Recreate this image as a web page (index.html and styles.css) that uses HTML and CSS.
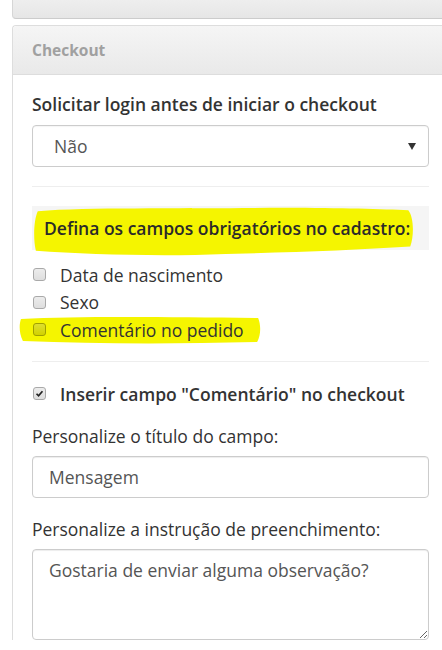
FILE: index.html
```html
<!DOCTYPE html>
<html lang="pt">
<head>
<meta charset="utf-8">
<link rel="stylesheet" href="styles.css">
</head>
<body>
<div class="page">
  <div class="panel panel-top"></div>
  <div class="panel panel-checkout">
    <div class="panel-heading">Checkout</div>
    <div class="panel-body">
      <label class="field-label semibold">Solicitar login antes de iniciar o checkout</label>
      <div class="select">
        <span>Não</span>
        <span class="caret"></span>
      </div>
      <hr class="sep sep-1">
      <div class="well">
        <svg class="marker marker-title" viewBox="0 0 400 50" preserveAspectRatio="none" aria-hidden="true">
          <path d="M6 6 C60 2 150 4 220 3 C300 2 360 4 392 5 C398 12 398 30 394 40 C330 44 250 46 170 48 C110 49 50 47 4 44 C1 32 2 14 6 6 Z" />
        </svg>
        <span class="well-text">Defina os campos obrigatórios no cadastro:</span>
      </div>
      <div class="checks">
        <div class="check-row"><span class="cb"></span><span>Data de nascimento</span></div>
        <div class="check-row"><span class="cb"></span><span>Sexo</span></div>
        <div class="check-row highlighted">
          <svg class="marker marker-row" viewBox="0 0 250 30" preserveAspectRatio="none" aria-hidden="true">
            <path d="M2 4 C60 1 150 2 246 3 C249 10 249 20 245 27 C160 29 80 29 4 26 C0 18 0 10 2 4 Z" />
          </svg>
          <span class="cb"></span><span>Comentário no pedido</span>
        </div>
      </div>
      <hr class="sep sep-2">
      <div class="check-row strong"><span class="cb checked"><svg viewBox="0 0 13 13" aria-hidden="true"><path d="M3 6.8 L5.4 9.2 L10 3.8" /></svg></span><span>Inserir campo "Comentário" no checkout</span></div>
      <label class="field-label lbl-2">Personalize o título do campo:</label>
      <input class="input" type="text" value="Mensagem">
      <label class="field-label lbl-3">Personalize a instrução de preenchimento:</label>
      <textarea class="textarea">Gostaria de enviar alguma observação?</textarea>
    </div>
  </div>
</div>
</body>
</html>
```

FILE: styles.css
```css
* { box-sizing: border-box; }
html, body { margin: 0; padding: 0; background: #fff; }
body {
  font-family: "Open Sans", "Liberation Sans", sans-serif;
  color: #333;
  font-size: 17.5px;
  overflow: hidden;
  width: 442px;
  height: 650px;
}
.page {
  padding-left: 12px;
  width: 442px;
  overflow: hidden;
}
.panel {
  border: 1px solid #d6d6d6;
  border-right: none;
  border-radius: 4px 0 0 4px;
}
.panel-top {
  height: 19px;
  background: linear-gradient(#eeeeee, #e6e6e6);
  border-top: none;
  border-bottom-color: #cccccc;
  border-radius: 0 0 0 4px;
}
.panel-checkout {
  margin-top: 6px;
  border-color: #dddddd;
  border-bottom: none;
  border-radius: 4px 0 0 0;
}
.panel-heading {
  height: 49px;
  padding-left: 19px;
  display: flex;
  align-items: center;
  font-size: 15.5px;
  font-weight: 700;
  color: #a0a0a0;
  background: linear-gradient(#f5f5f5, #e9e9e9);
  border-bottom: 1px solid #dddddd;
  border-radius: 4px 0 0 0;
}
.panel-body {
  padding: 17px 0 0 19px;
  width: 416px;
}
.field-label {
  display: block;
  line-height: 24px;
  color: #333;
}
.semibold { font-weight: 600; }
.select {
  margin-top: 9px;
  height: 42px;
  border: 1px solid #cccccc;
  border-radius: 4px;
  display: flex;
  align-items: center;
  justify-content: space-between;
  padding: 0 12px 0 21px;
  color: #555;
  background: #fff;
  box-shadow: inset 0 1px 1px rgba(0,0,0,0.04);
}
.caret {
  width: 0; height: 0;
  border-left: 4px solid transparent;
  border-right: 4px solid transparent;
  border-top: 7px solid #333;
}
.sep {
  border: none;
  border-top: 1px solid #eeeeee;
  margin: 0;
}
.sep-1 { margin-top: 19px; }
.well {
  position: relative;
  margin-top: 19px;
  height: 44px;
  background: #f5f5f5;
  display: flex;
  align-items: center;
  padding-left: 12px;
}
.well-text { position: relative; font-weight: 600; color: #2a2a2a; }
.marker {
  position: absolute;
  fill: #f5f500;
}
.marker-title {
  left: 0;
  top: -1px;
  width: 384px;
  height: 52px;
}
.checks { margin-top: 11px; }
.check-row {
  position: relative;
  display: flex;
  align-items: center;
  height: 27.5px;
}
.check-row > span { position: relative; }
.marker-row {
  left: -13px;
  top: -1px;
  width: 243px;
  height: 30px;
}
.cb {
  width: 13px;
  height: 13px;
  margin-left: 1px;
  margin-right: 14px;
  border: 1px solid #a9a9a9;
  border-radius: 3px;
  background: linear-gradient(#ececec, #dedede);
  flex: none;
  display: inline-flex;
}
.highlighted .cb { border-color: #a0a000; background: linear-gradient(#dede30, #d2d200); }
.cb svg { width: 11px; height: 11px; }
.cb svg path { fill: none; stroke: #222; stroke-width: 2; }
.sep-2 { margin-top: 17px; }
.strong {
  margin-top: 18px;
  font-weight: 600;
  height: 28px;
}
.lbl-2 { margin-top: 16px; }
.input, .textarea {
  display: block;
  width: 100%;
  font-family: "Open Sans", "Liberation Sans", sans-serif;
  font-size: 17.5px;
  color: #555;
  border: 1px solid #cccccc;
  border-radius: 4px;
  background: #fff;
  box-shadow: inset 0 1px 1px rgba(0,0,0,0.075);
  outline: none;
}
.input {
  margin-top: 8px;
  height: 42px;
  padding: 0 16px;
}
.lbl-3 { margin-top: 19px; }
.textarea {
  margin-top: 8px;
  height: 91px;
  padding: 8px 16px;
  resize: vertical;
  line-height: 24px;
}
```
